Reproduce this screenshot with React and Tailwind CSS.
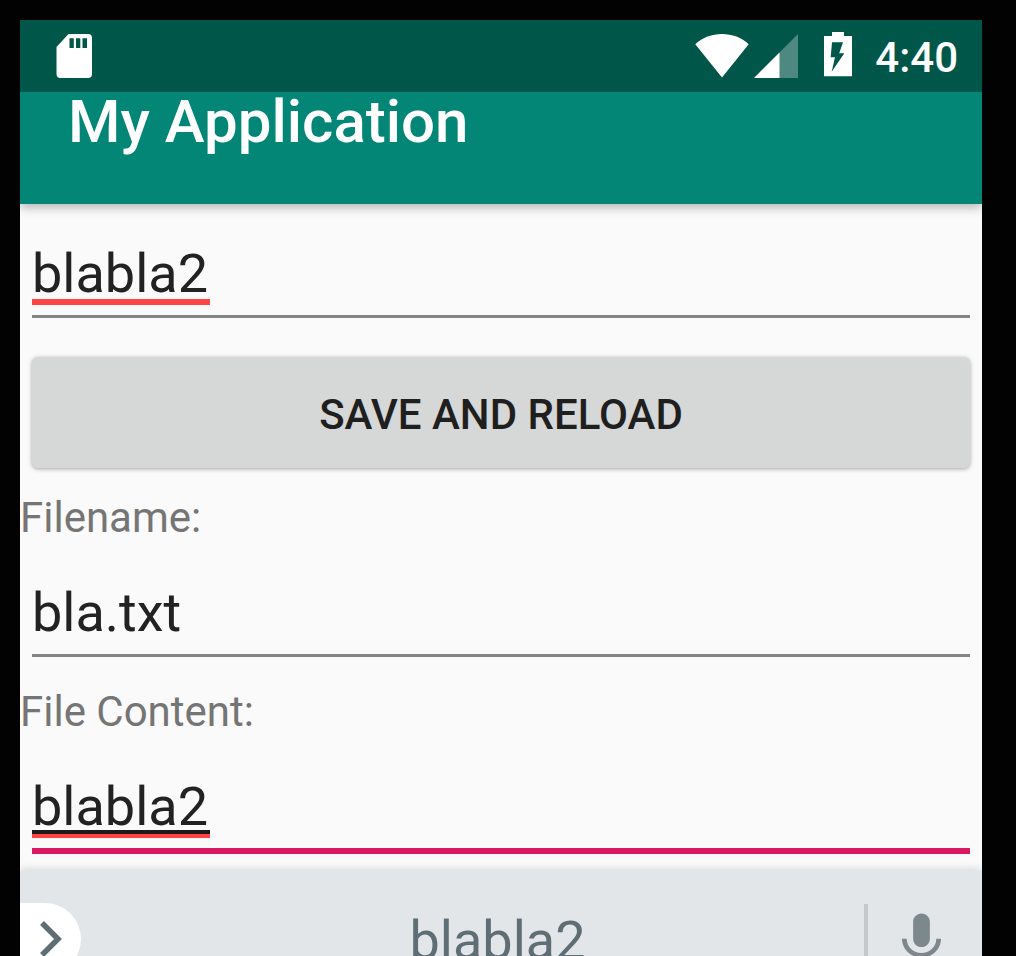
import React from "react";

function SdCardIcon() {
  return (
    <svg className="h-[72px] w-9" viewBox="0 0 36 72" fill="#fff" aria-hidden="true">
      <path
        fillRule="evenodd"
        d="M12.500 14H32a4 4 0 0 1 4 4v36a4 4 0 0 1-4 4H4.500a4 4 0 0 1-4-4V27zM13.500 18.300v9.700h4.300v-9.700zM20 18.300v9.700h4.300v-9.700zM26.500 18.300v9.700h4.500v-9.700z"
      />
    </svg>
  );
}

function WifiIcon() {
  return (
    <svg className="h-[72px] w-[54px]" viewBox="0 0 54 72" fill="#fff" aria-hidden="true">
      <path d="M27 57.500 0.300 24.200C7.500 17.500 17 14 27 14s19.500 3.500 26.700 10.200z" />
    </svg>
  );
}

function SignalIcon() {
  return (
    <svg className="h-[72px] w-11" viewBox="0 0 44 72" fill="#fff" aria-hidden="true">
      <path d="M44 14V58H0z" opacity="0.3" />
      <path d="M25.500 32.500V58H0z" />
    </svg>
  );
}

function BatteryIcon() {
  return (
    <svg className="h-[72px] w-7" viewBox="0 0 28 72" fill="#fff" aria-hidden="true">
      <path
        fillRule="evenodd"
        d="M8 12h12v4h8v40.300H0V16h8zM8 22.300 6.700 37.300H11L7.700 51.700 20.300 33.300H15.200L19 22.300z"
      />
    </svg>
  );
}

function MicIcon() {
  return (
    <svg className="h-[67px] w-[67px]" viewBox="0 0 24 24" fill="#7d888d" aria-hidden="true">
      <path d="M12 14c1.660 0 2.990-1.340 2.990-3L15 5c0-1.660-1.340-3-3-3S9 3.340 9 5v6c0 1.660 1.340 3 3 3zm5.300-3c0 3-2.540 5.100-5.300 5.100S6.700 14 6.700 11H5c0 3.410 2.720 6.230 6 6.720V21h2v-3.280c3.280-.48 6-3.300 6-6.720h-1.700z" />
    </svg>
  );
}

function TextField({ id, label, value, line, children }) {
  return (
    <div className={`relative mx-3 pt-[38px] pb-[9px] ${line}`}>
      <input
        id={id}
        aria-label={label}
        defaultValue={value}
        spellCheck={false}
        className="block h-16 w-full bg-transparent text-[54px] leading-[64px] text-[#222] outline-none"
      />
      {children}
    </div>
  );
}

const idleLine = "border-b-[3px] border-[#848585]";
const activeLine = "border-b-[6px] border-[#d81b60]";

export default function App() {
  return (
    <div className="h-screen overflow-hidden bg-[#020202] pt-5 pr-[34px] pl-5 font-[Roboto,sans-serif]">
      <div className="flex flex-col bg-[#fafafa]">
        <div className="flex h-[72px] items-center justify-between bg-[#005749] pr-6 pl-9">
          <SdCardIcon />
          <div className="flex items-center">
            <WifiIcon />
            <span className="ml-[5px] flex"><SignalIcon /></span>
            <span className="ml-[26px] flex"><BatteryIcon /></span>
            <time className="ml-[23px] pt-1 text-[42px] leading-[50px] font-medium text-white">4:40</time>
          </div>
        </div>
        <header className="h-28 bg-[#048677] pl-12 shadow-[0_3px_10px_rgba(0,0,0,0.3)] [clip-path:inset(0_0_-20px_0)]">
          <h1 className="text-[60px] leading-[60px] font-medium text-white">My Application</h1>
        </header>

        <main className="flex flex-col pb-[17px]">
          <TextField id="text" label="Text" value="blabla2" line={idleLine}>
            <span className="absolute bottom-[10px] left-0 h-[6px] w-[178px] bg-[#ff4444]" />
          </TextField>
          <button
            type="button"
            className="mx-3 mt-[39px] h-[111px] rounded-[6px] bg-[#d6d8d7] pt-1 text-[42px] leading-[50px] font-medium text-[#1f1f1f] shadow-[0_1px_4px_rgba(0,0,0,0.35)]"
          >
            SAVE AND RELOAD
          </button>
          <label htmlFor="filename" className="mt-[25px] text-[42px] leading-[50px] text-[#757575]">
            Filename:
          </label>
          <TextField id="filename" value="bla.txt" line={idleLine} />
          <label htmlFor="content" className="mt-[30px] text-[42px] leading-[50px] text-[#757575]">
            File Content:
          </label>
          <TextField id="content" value="blabla2" line={activeLine}>
            <span className="absolute bottom-[10px] left-0 h-2 w-[178px] border-t-4 border-[#1c1a1a] bg-[#ff4444]" />
          </TextField>
        </main>

        <div className="flex h-[136px] shrink-0 items-center bg-[#e2e6e9] shadow-[0_-2px_8px_rgba(0,0,0,0.14)] [clip-path:inset(-20px_0_0_0)]">
          <button
            type="button"
            aria-label="More"
            className="flex h-[72px] w-[61px] items-center rounded-r-full bg-white pl-5"
          >
            <svg className="h-10 w-6" viewBox="0 0 24 40" fill="none" stroke="#5f6d74" strokeWidth="5.500" aria-hidden="true">
              <path d="M2 4 18 20 2 36" />
            </svg>
          </button>
          <button type="button" className="ml-[50px] flex-1 pt-1 text-center text-[54px] leading-[64px] text-[#5f6d74]">
            blabla2
          </button>
          <span className="h-[70px] w-1 bg-[#c4c8ca]" />
          <button type="button" aria-label="Voice input" className="mr-[27px] ml-5 pt-1">
            <MicIcon />
          </button>
        </div>
      </div>
    </div>
  );
}
